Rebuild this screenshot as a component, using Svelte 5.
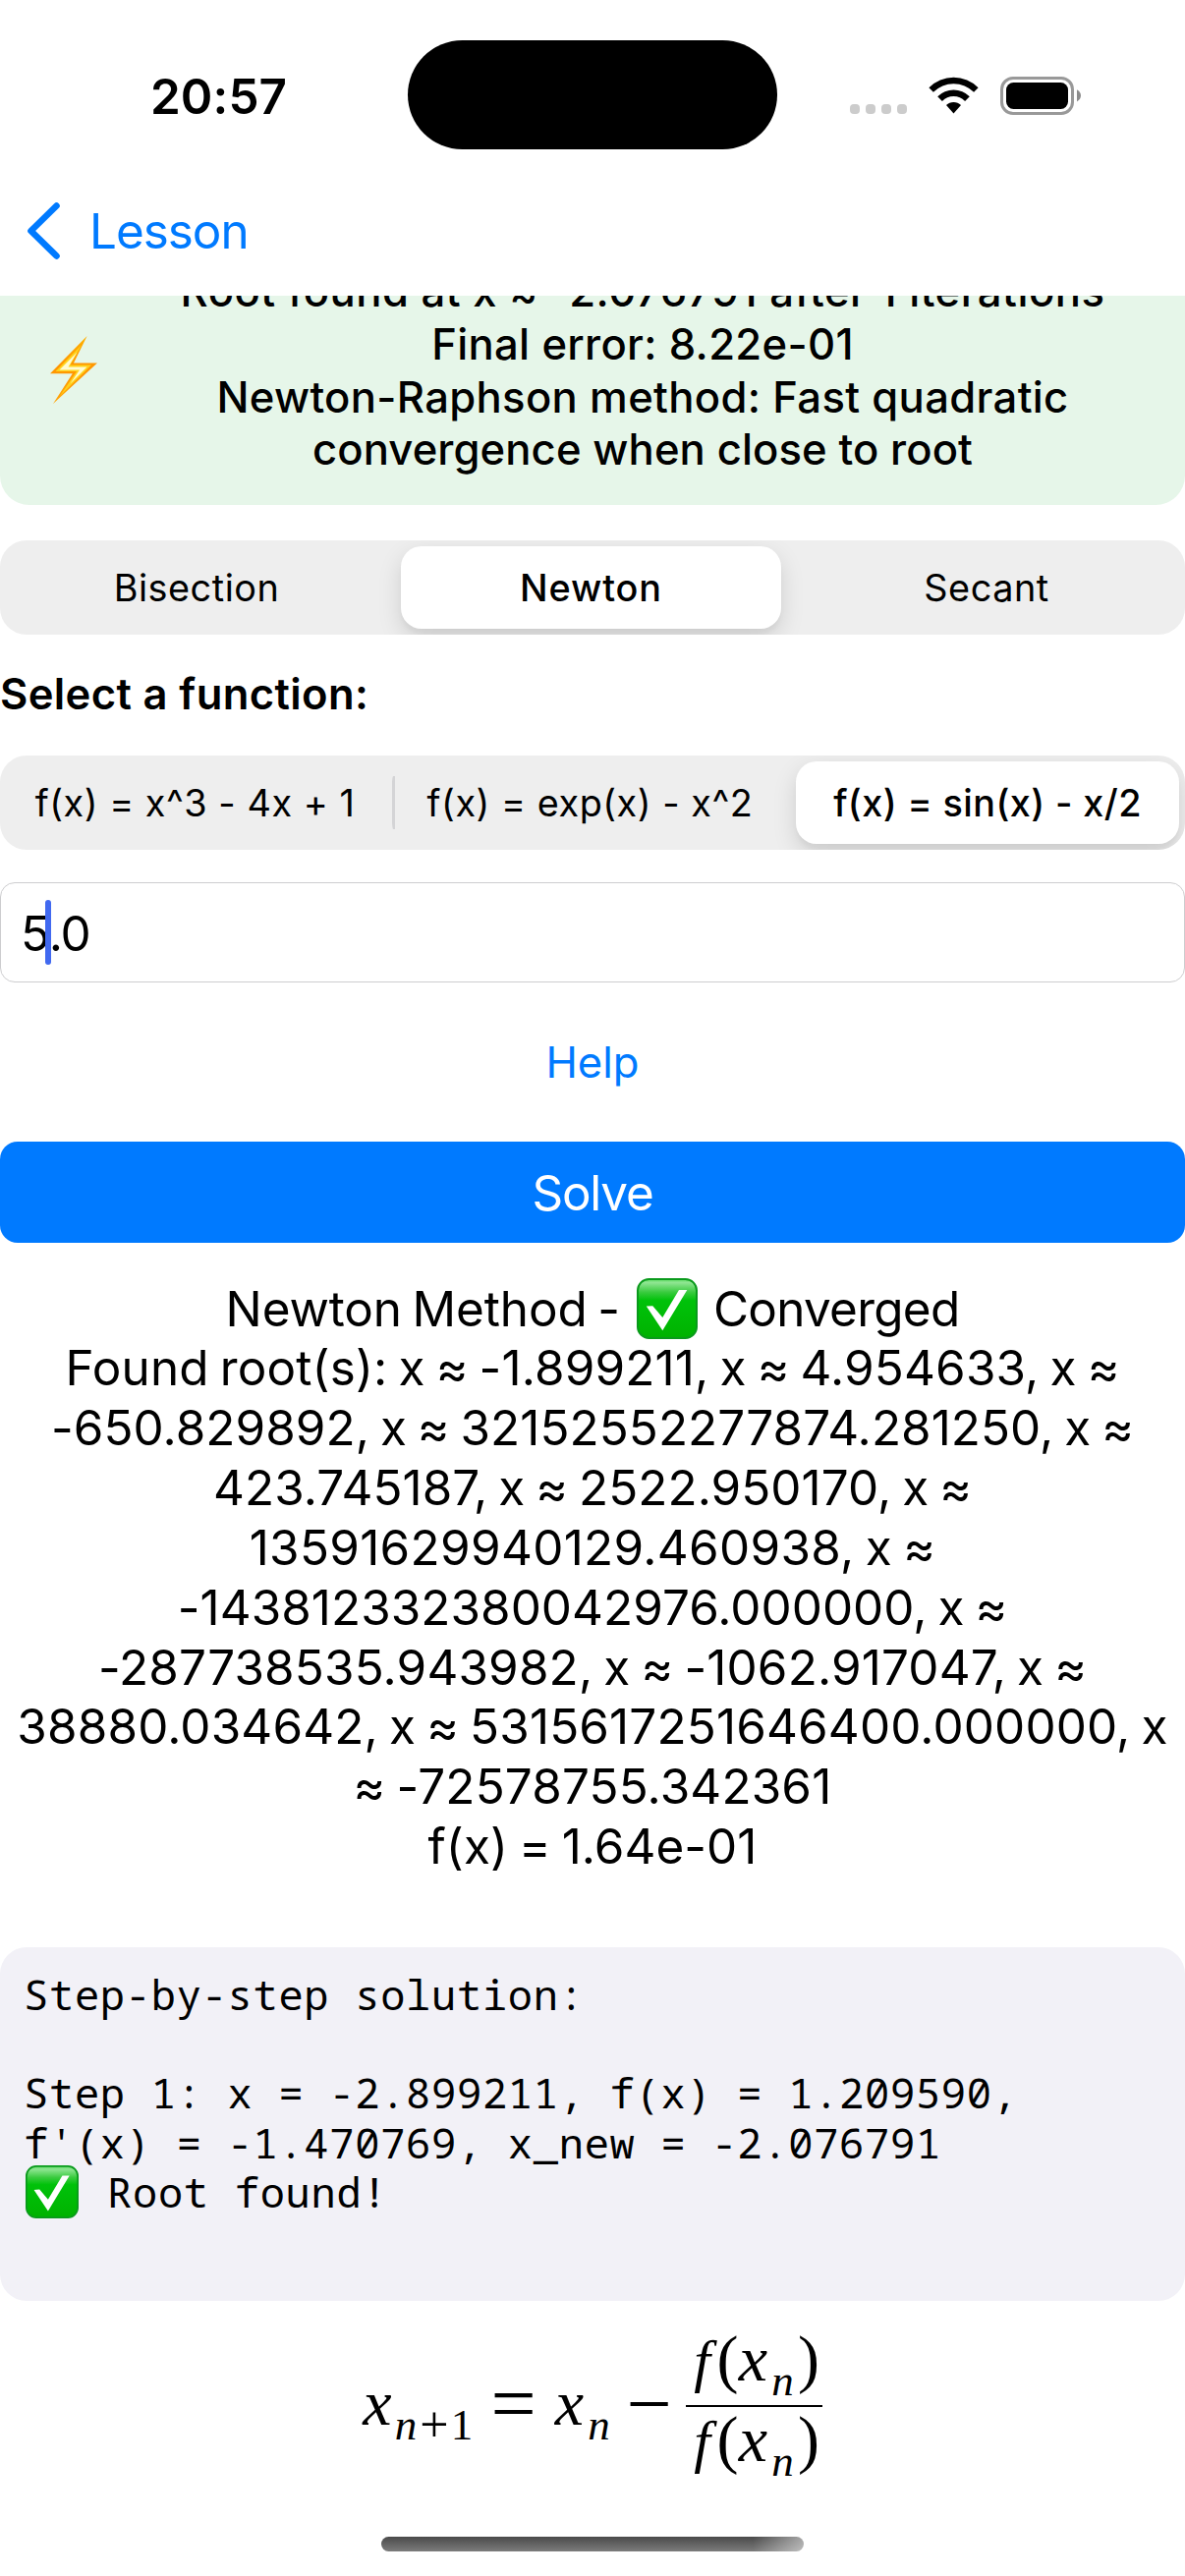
<script>
  const methods = ['Bisection', 'Newton', 'Secant'];
  const functions = ['f(x) = x^3 - 4x + 1', 'f(x) = exp(x) - x^2', 'f(x) = sin(x) - x/2'];
  let method = $state(1);
  let fn = $state(2);

  const roots = [
    ['Found root(s): x ≈ -1.899211, x ≈ 4.954633, x ≈', 'mid'],
    ['-650.829892, x ≈ 32152552277874.281250, x ≈', 'tight'],
    ['423.745187, x ≈ 2522.950170, x ≈', 'tight'],
    ['13591629940129.460938, x ≈', 'loose'],
    ['-143812332380042976.000000, x ≈', 'tight'],
    ['-287738535.943982, x ≈ -1062.917047, x ≈', 'mid'],
    ['38880.034642, x ≈ 5315617251646400.000000, x', 'mid'],
    ['≈ -72578755.342361', 'mid'],
    ['f(x) = 1.64e-01', 'tight']
  ];
</script>

{#snippet check(cls)}
  <svg class={cls} viewBox="0 0 62 62" role="img" aria-label="✅">
    <defs>
      <linearGradient id="g-{cls}" x1="0" y1="0" x2="0" y2="1">
        <stop offset="0" stop-color="#5fdc62" />
        <stop offset="0.06" stop-color="#8fe592" />
        <stop offset="0.22" stop-color="#3acb3f" />
        <stop offset="0.36" stop-color="#00c20a" />
        <stop offset="1" stop-color="#00b200" />
      </linearGradient>
    </defs>
    <rect x="1" y="1" width="60" height="60" rx="11.5" fill="url(#g-{cls})" stroke="#0a9a1c" stroke-width="2" />
    <path d="M9.8 28.6 L16.3 28.2 L26.3 40 L43 12 L51.3 12 L26.3 53.3Z" fill="#fff" />
  </svg>
{/snippet}

{#snippet quotient()}
  <span class="g w33">f</span><span class="g par w19">(</span><span class="g x w33">x</span><span class="g w27 sub">n</span><span class="g par w26">)</span>
{/snippet}

<div class="screen">
  <header class="status">
    <div class="time">20:57</div>
    <div class="island"></div>
    <div class="indicators">
      <div class="dots"><i></i><i></i><i></i><i></i></div>
      <svg class="wifi" viewBox="0 0 51 38">
        <path d="M0.4 11.2 A35.5 35.5 0 0 1 50.6 11.2 L46.1 15.8 A29 29 0 0 0 4.9 15.8Z" />
        <path d="M9.2 20.2 A23 23 0 0 1 41.8 20.2 L37.1 24.9 A16.4 16.4 0 0 0 13.9 24.9Z" />
        <path d="M18 29 A10.6 10.6 0 0 1 33 29 L25.5 37.4Z" />
      </svg>
      <svg class="battery" viewBox="0 0 83 39">
        <rect x="1.5" y="1.5" width="72" height="36" rx="11.5" fill="none" stroke="#999" stroke-width="3" />
        <rect x="6" y="6" width="63" height="27" rx="7.5" />
        <path d="M78 13.2 Q82 15.5 82 19.3 Q82 23 78 25.4Z" fill="#8c8c8c" />
      </svg>
    </div>
  </header>

  <nav>
    <svg viewBox="0 0 34 58"><path d="M30.5 3.5 L4.5 29 L30.5 54.5" /></svg>
    <span>Lesson</span>
  </nav>

  <main>
    <section class="card">
      <svg class="bolt" viewBox="0 0 48 70" role="img" aria-label="⚡">
        <defs>
          <linearGradient id="bolt" x1="0" y1="0" x2="0" y2="1">
            <stop offset="0" stop-color="#ffb000" />
            <stop offset="0.45" stop-color="#ff9500" />
            <stop offset="1" stop-color="#ffa60a" />
          </linearGradient>
        </defs>
        <path d="M37.6 0 L0 38.2 L22.8 38.2 L3 69 L48 27.6 L24 27.6Z" fill="url(#bolt)" />
        <path d="M32 9 L5.5 36 L27 36 L10 61 L42 29.6 L20.5 29.6Z" fill="#ffd21c" />
        <path d="M27.5 16.5 L9.5 34.5 L30 34.5 L20.5 48.5 L37.5 31.5 L18.5 31.5Z" fill="#fffbd0" />
      </svg>
      <div class="summary">
        <p class="t1">Root found at x ≈ -2.076791 after 1 iterations</p>
        <p class="t2">Final error: 8.22e-01</p>
        <p class="t2">Newton-Raphson method: Fast quadratic</p>
        <p class="t3">convergence when close to root</p>
      </div>
    </section>

    <div class="segmented methods">
      {#each methods as m, i}
        <button class:on={method === i} onclick={() => (method = i)}>{m}</button>
      {/each}
    </div>

    <h2>Select a function:</h2>

    <div class="segmented functions">
      {#each functions as f, i}
        <button class:on={fn === i} class:ruled={i > 0 && fn !== i && fn !== i - 1} onclick={() => (fn = i)}>{f}</button>
      {/each}
    </div>

    <div class="field">5<span class="caret"></span>.0</div>

    <button class="help">Help</button>
    <button class="solve">Solve</button>

    <section class="result">
      <p class="headline"><span class="nm">Newton Method -</span>{@render check('big')}<span class="cv">Converged</span></p>
      {#each roots as [text, tracking]}
        <p class={tracking}>{text}</p>
      {/each}
    </section>

    <section class="steps">
      <p>Step-by-step solution:</p>
      <p>&nbsp;</p>
      <p>Step 1: x = -2.899211, f(x) = 1.209590,</p>
      <p class="second">f'(x) = -1.470769, x_new = -2.076791</p>
      <p class="found">{@render check('small')}<span>Root found!</span></p>
    </section>

    <section class="formula">
      <div class="row">
        <span class="g x w32">x</span><span class="g w26 sub">n</span><span class="g w32 sub up plus">+</span><span class="g w24 sub up">1</span><span class="g w81 op">=</span><span class="g x w33">x</span><span class="g w27 sub">n</span><span class="g w75 op">−</span>
      </div>
      <div class="fraction">
        <div class="num">{@render quotient()}</div>
        <div class="bar"></div>
        <div class="den">{@render quotient()}</div>
      </div>
    </section>
  </main>

  <div class="home"></div>
</div>

<style>
  :global(body) { margin: 0; background: #fff; }
  p, h2 { margin: 0; font-weight: inherit; font-size: inherit; }
  button { border: 0; background: none; padding: 0; font: inherit; color: inherit; letter-spacing: inherit; }
  .screen {
    width: 1206px; height: 2622px; overflow: hidden; box-sizing: border-box;
    display: flex; flex-direction: column; align-items: stretch;
    background: #fff; color: #000;
    font-family: Inter, "Liberation Sans", sans-serif; font-size: 49.4px;
  }

  .status {
    flex: none; height: 168px; box-sizing: border-box; padding: 41px 0 16px;
    display: grid; grid-template-columns: 415px 376px 415px; align-items: center;
  }
  .time { padding: 3px 0 0 153px; font-weight: 600; letter-spacing: 0.1px; line-height: 60px; }
  .island { height: 111px; border-radius: 56px; background: #000; }
  .indicators { display: flex; align-items: flex-end; padding: 2px 0 0 74px; height: 39px; }
  .dots { display: flex; gap: 6px; padding-bottom: 1px; }
  .dots i { width: 10px; height: 10px; border-radius: 4px; background: #ccc; }
  .wifi { width: 51px; height: 38px; margin: 0 22px 1px 22px; }
  .battery { width: 83px; height: 39px; }

  nav { flex: none; height: 133px; display: flex; align-items: center; padding-left: 27px; color: #007aff; letter-spacing: -1px; }
  nav svg { width: 34px; height: 58px; margin-right: 30px; }
  nav path { fill: none; stroke: #007aff; stroke-width: 6.6; stroke-linecap: round; stroke-linejoin: round; }

  main { flex: none; height: 2281px; overflow: hidden; display: flex; flex-direction: column; }
  main > * { flex: none; }

  .card {
    margin-top: -62px; height: 275px; box-sizing: border-box; padding: 0 28px 0 51px;
    display: flex; align-items: center; border-radius: 30px; background: #e6f6e9;
    font-size: 43.6px; font-weight: 500;
  }
  .bolt { width: 48px; height: 70px; }
  .summary { flex: 1; margin-left: 31px; padding-top: 2px; text-align: center; line-height: 53.75px; white-space: nowrap; }
  .t1 { letter-spacing: 0.5px; }
  .t2 { letter-spacing: 0.33px; }
  .t3 { letter-spacing: 0.1px; }

  .segmented {
    display: grid; height: 96px; box-sizing: border-box; padding: 6px;
    border-radius: 27px; background: #eee; overflow: hidden; font-size: 37.8px; white-space: nowrap; letter-spacing: 0.53px;
  }
  .methods { margin-top: 36px; grid-template-columns: 388px 387px 390px; column-gap: 14px; }
  .functions { margin-top: 36px; grid-template-columns: 385px 1fr 390px; column-gap: 8px; }
  .segmented button { border-radius: 21px; }
  .segmented .on { background: #fff; font-weight: 500; box-shadow: 0 9px 24px rgba(0, 0, 0, 0.13), 0 6px 4px rgba(0, 0, 0, 0.03); }
  .methods .on { letter-spacing: 0.9px; }
  .functions .on { letter-spacing: 0.4px; }
  .ruled { background: linear-gradient(#d4d4d6, #d4d4d6) no-repeat 0 50% / 3px 54px; border-radius: 0; }

  h2 { margin-top: 34px; font-size: 43.6px; font-weight: 600; line-height: 54px; letter-spacing: 0.36px; }
  h2 + .functions { margin-top: 35px; }

  .field {
    margin-top: 33px; height: 102px; box-sizing: border-box; border: 1.5px solid #cdcdcf; border-radius: 15px;
    display: flex; align-items: center; padding: 1px 0 0 20px; letter-spacing: -1.2px;
  }
  .caret { width: 6px; height: 66px; border-radius: 3px; background: #4169f0; margin: -1px -2.5px 0 -3.5px; }

  .help { margin-top: 54px; height: 54px; font-size: 43.6px; color: #007aff; }
  .solve { margin-top: 54px; height: 103px; border-radius: 18px; background: #007aff; color: #fff; letter-spacing: -1.2px; }

  .result { margin-top: 36.5px; text-align: center; line-height: 60.85px; white-space: nowrap; word-spacing: -3px; }
  .headline { display: flex; justify-content: center; align-items: center; height: 60.85px; }
  .nm { letter-spacing: -0.12px; }
  .cv { letter-spacing: -0.7px; }
  .big { width: 62px; height: 62px; margin: 0 16px 0 17px; }
  .tight { letter-spacing: 0.06px; }
  .mid { letter-spacing: 0.16px; }
  .loose { letter-spacing: 0.33px; }

  .steps {
    margin-top: 72px; height: 360px; box-sizing: border-box; padding: 23px 24px; border-radius: 27px;
    background: #f2f1f7; font: 42px/50px "Noto Sans Mono", "DejaVu Sans Mono", monospace; letter-spacing: 0.74px; white-space: nowrap;
  }
  .second { padding-top: 1px; }
  .found { display: flex; align-items: center; margin-top: -2px; }
  .small { width: 54px; height: 54px; margin: 0 29px 0 2px; }

  .formula {
    margin-top: 31.4px; height: 151.3px; padding-left: 368px;
    display: flex; align-items: center; font: italic 60px/60px "Liberation Serif", serif;
  }
  .row, .num, .den { display: flex; height: 60px; }
  .row { padding-bottom: 2px; }
  .g { display: flex; justify-content: center; white-space: nowrap; }
  .w19 { width: 19px; } .w24 { width: 24px; } .w26 { width: 26px; } .w27 { width: 27px; }
  .w32 { width: 32px; } .w33 { width: 33px; } .w75 { width: 75px; } .w81 { width: 81px; }
  .x { font-size: 66px; line-height: 56px; }
  .sub { font-size: 45px; padding-top: 20px; }
  .up { font-style: normal; }
  .plus { font-size: 52px; padding-top: 20px; }
  .par { font-style: normal; font-size: 66px; line-height: 56px; }
  .op { font-style: normal; font-size: 82px; line-height: 58px; }
  .fraction { width: 138.5px; padding-bottom: 9.7px; }
  .bar { height: 2.7px; margin: 14.3px 0 4.6px; background: #000; }

  .home {
    flex: none; align-self: center; width: 430px; height: 15px; margin-right: 1px; border-radius: 8px;
    background: linear-gradient(90deg, transparent 88%, rgba(255, 255, 255, 0.5)), linear-gradient(#4a4a4a, #7c7c7c);
  }
</style>
